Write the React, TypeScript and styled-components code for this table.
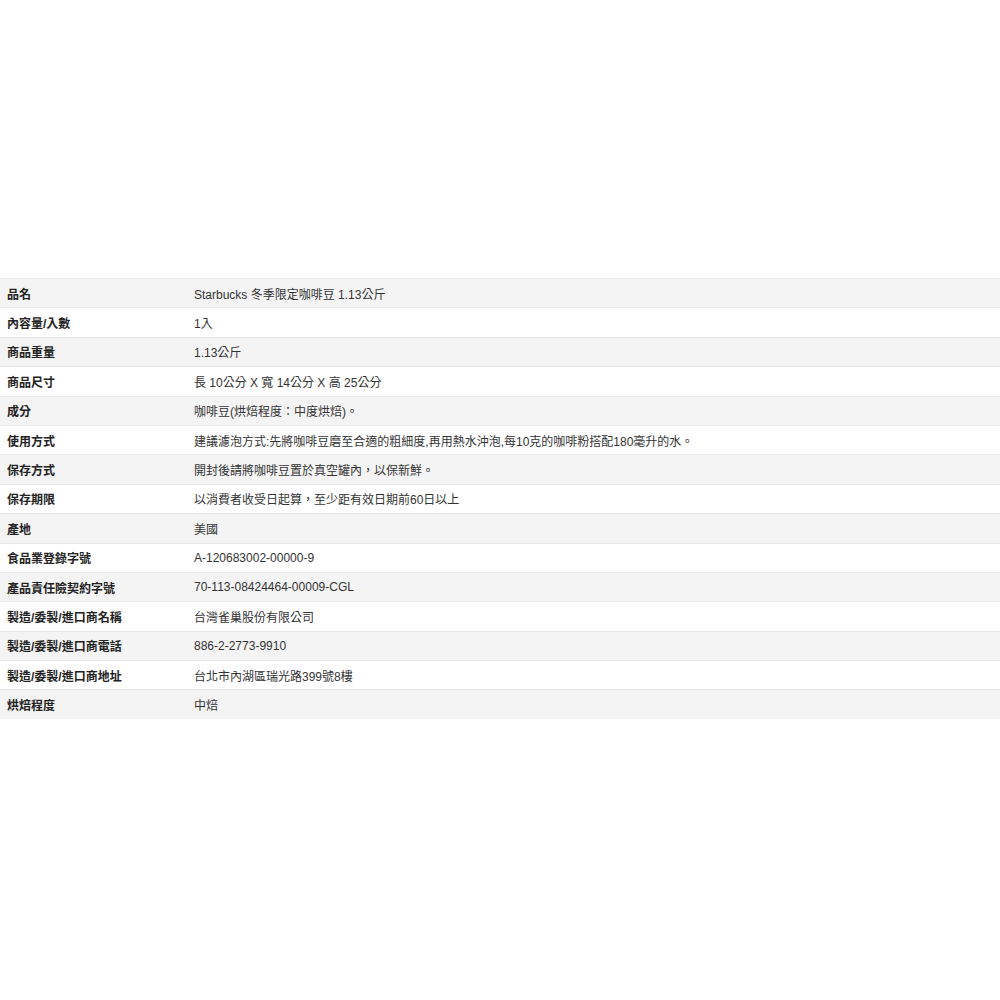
import React from "react";
import styled, { createGlobalStyle } from "styled-components";

const GlobalStyle = createGlobalStyle`
  html, body {
    margin: 0;
    padding: 0;
    background: #fff;
  }
  body {
    font-family: "Liberation Sans", Arial, "Noto Sans CJK TC", sans-serif;
    color: #333;
  }
`;

const Page = styled.div`
  padding-top: 278px;
  width: 1000px;
`;

const SpecTable = styled.table`
  width: 100%;
  border-collapse: collapse;
  border-spacing: 0;
  font-family: "Liberation Sans", Arial, "Noto Sans CJK TC", sans-serif;
  font-size: 12px;
`;

const Row = styled.tr<{ $striped: boolean }>`
  background: ${(p) => (p.$striped ? "#f4f4f4" : "#fff")};
  border-top: 1px solid #e8e8e8;
`;

const Label = styled.th`
  width: 173px;
  padding: 0 7px;
  height: 28.4px;
  text-align: left;
  font-weight: bold;
  color: #222;
  vertical-align: middle;
`;

const Value = styled.td`
  padding: 0 7px;
  height: 28.4px;
  vertical-align: middle;
  color: #333;
`;

const specs: [string, string][] = [
  ["品名", "Starbucks 冬季限定咖啡豆 1.13公斤"],
  ["內容量/入數", "1入"],
  ["商品重量", "1.13公斤"],
  ["商品尺寸", "長 10公分 X 寬 14公分 X 高 25公分"],
  ["成分", "咖啡豆(烘焙程度：中度烘焙)。"],
  ["使用方式", "建議濾泡方式:先將咖啡豆磨至合適的粗細度,再用熱水沖泡,每10克的咖啡粉搭配180毫升的水。"],
  ["保存方式", "開封後請將咖啡豆置於真空罐內，以保新鮮。"],
  ["保存期限", "以消費者收受日起算，至少距有效日期前60日以上"],
  ["產地", "美國"],
  ["食品業登錄字號", "A-120683002-00000-9"],
  ["產品責任險契約字號", "70-113-08424464-00009-CGL"],
  ["製造/委製/進口商名稱", "台灣雀巢股份有限公司"],
  ["製造/委製/進口商電話", "886-2-2773-9910"],
  ["製造/委製/進口商地址", "台北市內湖區瑞光路399號8樓"],
  ["烘焙程度", "中焙"],
];

export default function App() {
  return (
    <>
      <GlobalStyle />
      <Page>
        <SpecTable>
          <tbody>
            {specs.map(([k, v], i) => (
              <Row key={k} $striped={i % 2 === 0}>
                <Label>{k}</Label>
                <Value>{v}</Value>
              </Row>
            ))}
          </tbody>
        </SpecTable>
      </Page>
    </>
  );
}
